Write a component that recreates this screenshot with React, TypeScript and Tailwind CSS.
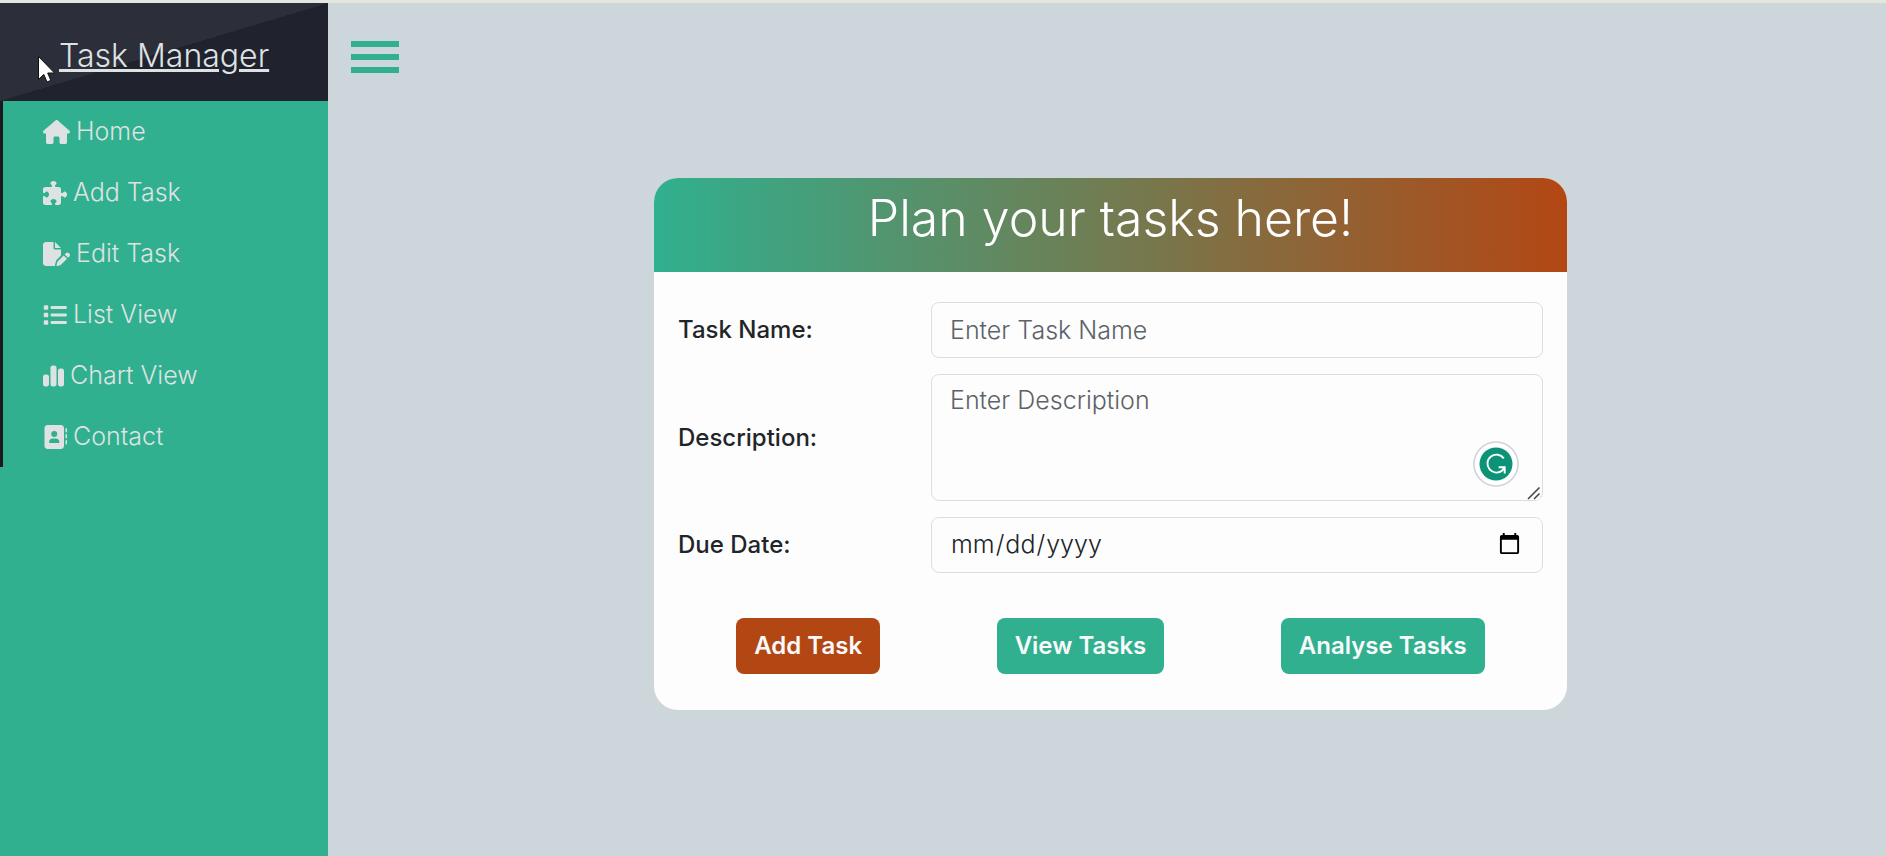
import type { ComponentType } from "react";
import {
  FaHouse,
  FaPuzzlePiece,
  FaFilePen,
  FaList,
  FaChartSimple,
  FaAddressBook,
} from "react-icons/fa6";

type NavItem = {
  label: string;
  icon: ComponentType<{ className?: string }>;
  width: string;
};

const navItems: NavItem[] = [
  { label: "Home", icon: FaHouse, width: "w-[27px]" },
  { label: "Add Task", icon: FaPuzzlePiece, width: "w-6" },
  { label: "Edit Task", icon: FaFilePen, width: "w-[27px]" },
  { label: "List View", icon: FaList, width: "w-6" },
  { label: "Chart View", icon: FaChartSimple, width: "w-[21px]" },
  { label: "Contact", icon: FaAddressBook, width: "w-6" },
];

const fieldClass =
  "w-full rounded-lg border border-[#dbdde0] bg-[#fdfdfd] px-[18px] text-[25px] font-light text-[#212529] outline-none placeholder:text-[#5c6268]";
const labelClass = "font-medium text-[#212529]";
const buttonClass = "h-14 rounded-lg px-[18px] font-semibold text-[#f8f9fa]";

function Sidebar() {
  return (
    <aside className="w-[328px] shrink-0 bg-[#30b08f] text-[#dfe2e3]">
      <div className="flex h-[98px] items-center bg-[linear-gradient(to_bottom_right,#2c2f3a_50%,#20232e_50%)] pt-2 pl-[59px]">
        <a
          href="#top"
          className="text-[32px] leading-10 font-light underline decoration-[3px] underline-offset-2"
        >
          Task Manager
        </a>
      </div>
      <nav className="border-l-[3px] border-[#1a1a1e]">
        <ul>
          {navItems.map(({ label, icon: Icon, width }) => (
            <li key={label}>
              <a
                href={"#" + label.toLowerCase().replace(" ", "-")}
                className="flex h-[61px] items-center gap-[6px] pl-10 text-[25px] font-light"
              >
                <Icon className={"h-6 " + width} />
                {label}
              </a>
            </li>
          ))}
        </ul>
      </nav>
    </aside>
  );
}

function AssistantBadge() {
  return (
    <svg
      viewBox="0 0 46 46"
      className="pointer-events-none absolute right-6 bottom-[14px] size-[46px]"
      aria-hidden="true"
    >
      <circle cx="23" cy="23" r="22" fill="#fff" stroke="#cfd1da" strokeWidth="1.5" />
      <circle cx="23" cy="23" r="16.5" fill="#0b9277" />
      <path
        d="M30.8 17.4A9 9 0 1 0 29.6 29.2L31.6 26.6M25.6 26.3H31.7V32.4"
        fill="none"
        stroke="#fff"
        strokeWidth="1.9"
      />
    </svg>
  );
}

function ResizeGrip() {
  return (
    <svg
      viewBox="0 0 14 14"
      className="pointer-events-none absolute right-[2px] bottom-[1px] size-[14px]"
      aria-hidden="true"
    >
      <path d="M0 0H14V9Q14 14 9 14H0Z" fill="#fdfdfd" />
      <path d="M1 13L12.5 1.5M7 13L12.5 7.5" stroke="#4a4a4e" strokeWidth="1.6" />
    </svg>
  );
}

function TaskForm() {
  return (
    <section className="w-[913px] max-w-full overflow-hidden rounded-3xl bg-[#fdfdfd]">
      <h1 className="bg-linear-to-r/srgb from-[#30b08f] to-[#b34714] pt-[10px] pb-6 text-center text-[50px] leading-[60px] font-light text-white">
        Plan your tasks here!
      </h1>
      <form
        className="px-6 pt-[30px] pb-9 text-2xl"
        onSubmit={(event) => event.preventDefault()}
      >
        <div className="grid grid-cols-[253px_1fr] items-center gap-y-4">
          <label htmlFor="task-name" className={labelClass}>
            Task Name:
          </label>
          <input
            id="task-name"
            type="text"
            placeholder="Enter Task Name"
            className={fieldClass + " h-14"}
          />
          <label htmlFor="description" className={labelClass}>
            Description:
          </label>
          <div className="relative flex">
            <textarea
              id="description"
              placeholder="Enter Description"
              className={fieldClass + " h-[127px] resize py-[9px]"}
            />
            <AssistantBadge />
            <ResizeGrip />
          </div>
          <label htmlFor="due-date" className={labelClass}>
            Due Date:
          </label>
          <input id="due-date" type="date" className={fieldClass + " h-14"} />
        </div>
        <div className="mt-[45px] flex justify-around">
          <button type="submit" className={buttonClass + " bg-[#b34714]"}>
            Add Task
          </button>
          <button type="button" className={buttonClass + " bg-[#30b08f]"}>
            View Tasks
          </button>
          <button type="button" className={buttonClass + " bg-[#30b08f]"}>
            Analyse Tasks
          </button>
        </div>
      </form>
    </section>
  );
}

function Pointer() {
  return (
    <svg
      viewBox="0 0 18 28"
      className="pointer-events-none absolute top-[52px] left-[37px] h-7 w-[18px]"
      aria-hidden="true"
    >
      <path
        d="M1.5 1.5V24.5L6.8 19.4L10 27L13.8 25.4L10.7 18H17.5Z"
        fill="#fff"
        stroke="#111"
        strokeWidth="1"
      />
    </svg>
  );
}

export default function App() {
  return (
    <div className="relative flex min-h-screen border-t-[3px] border-[#e4e7dc] bg-[#cdd6da] font-['Inter','Liberation_Sans',sans-serif]">
      <Sidebar />
      <main className="flex flex-1 flex-col pl-[23px]">
        <button
          type="button"
          aria-label="Toggle menu"
          className="mt-[38px] flex w-12 flex-col gap-[7px]"
        >
          <span className="h-[6px] w-full bg-[#30b08f]" />
          <span className="h-[6px] w-full bg-[#30b08f]" />
          <span className="h-[6px] w-full bg-[#30b08f]" />
        </button>
        <div className="mt-[105px] flex justify-center pr-4">
          <TaskForm />
        </div>
      </main>
      <Pointer />
    </div>
  );
}
